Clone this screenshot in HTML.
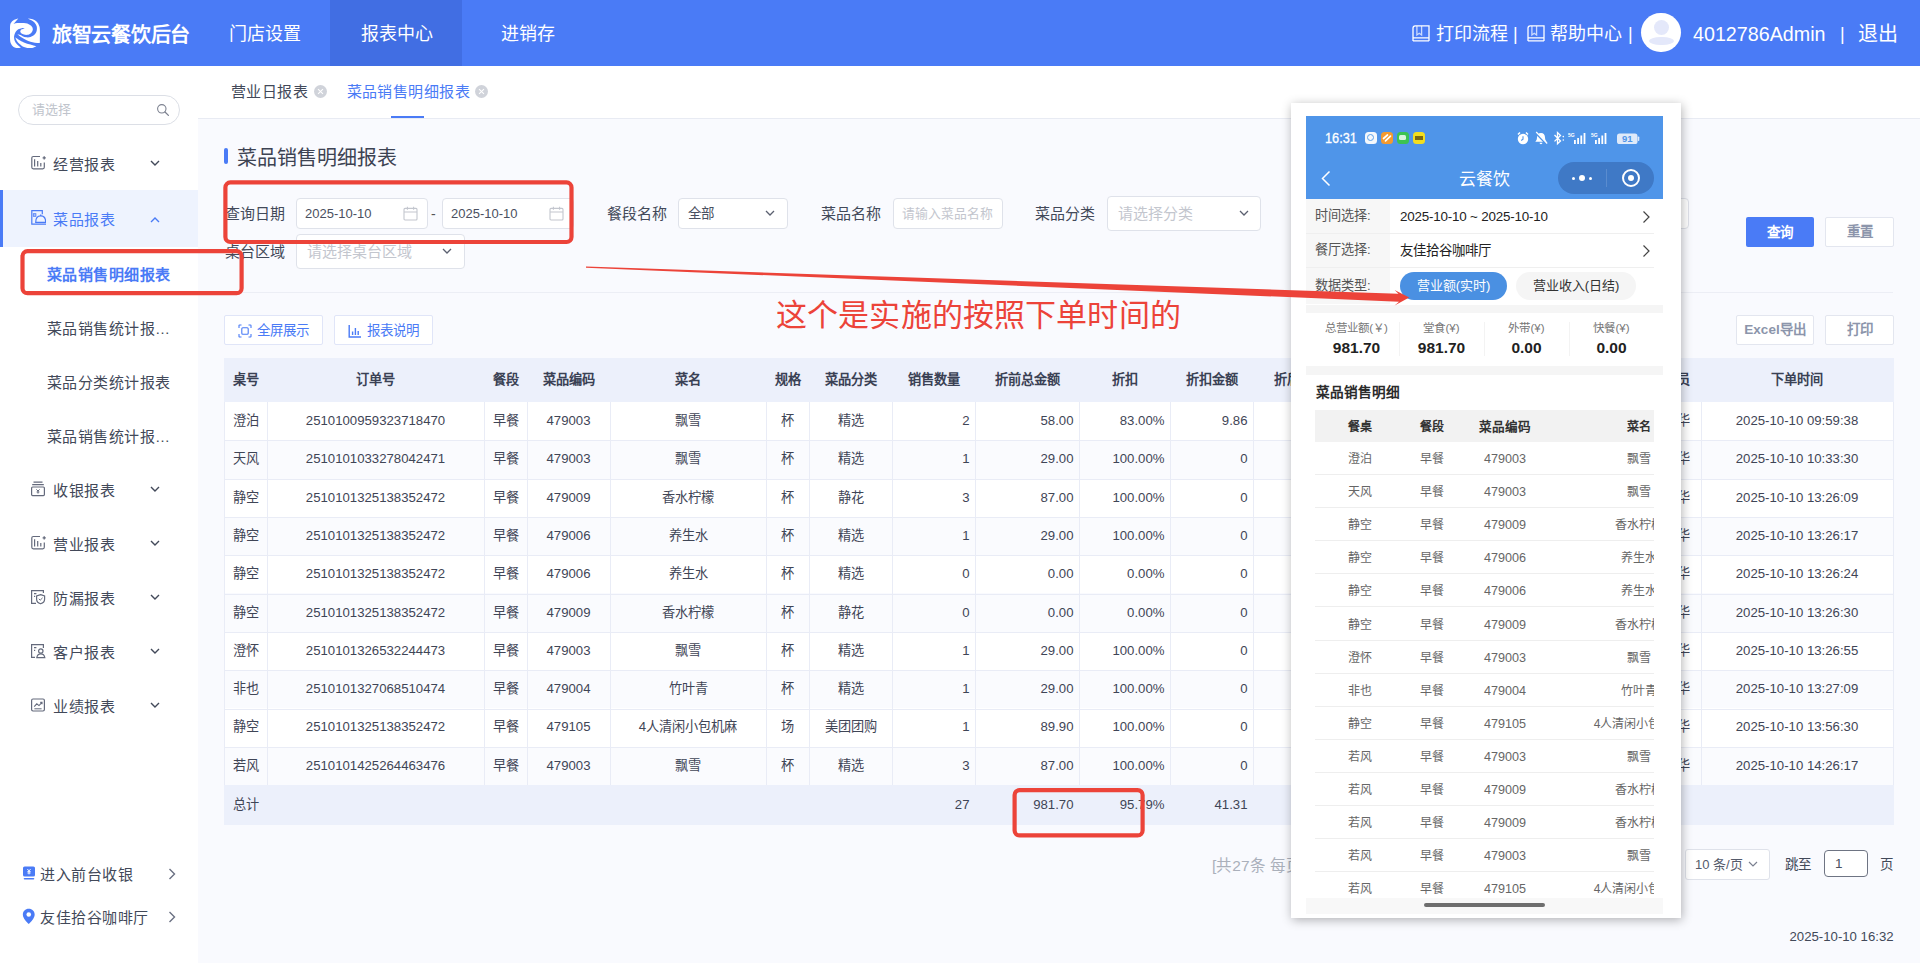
<!DOCTYPE html>
<html lang="zh-CN">
<head>
<meta charset="utf-8">
<title>菜品销售明细报表</title>
<style>
*{box-sizing:border-box;margin:0;padding:0}
html,body{width:1920px;height:963px;overflow:hidden}
body{font-family:"Liberation Sans",sans-serif;background:#f9fafe;color:#424959;position:relative;font-size:14px}
.abs{position:absolute}
/* ---------- header ---------- */
#hd{position:absolute;left:0;top:0;width:1920px;height:66px;background:#4a7bf6;color:#fff}
#hd .act{position:absolute;left:330px;top:0;width:132px;height:66px;background:#416ee3}
#hd .t{position:absolute;top:0;height:66px;line-height:68px;font-size:18px;white-space:nowrap}
#hd .brand{left:52px;font-size:20px;font-weight:bold;letter-spacing:-0.3px;line-height:70px}
/* ---------- sidebar ---------- */
#sb{position:absolute;left:0;top:66px;width:198px;height:897px;background:#fff}
#sb .search{position:absolute;left:18px;top:29px;width:162px;height:30px;border:1px solid #dcdfe6;border-radius:15px}
#sb .search span{position:absolute;left:13px;top:0;line-height:28px;font-size:13px;color:#c0c4cc}
.mi{position:absolute;left:0;width:198px;height:54px;line-height:57px;font-size:15px;letter-spacing:.7px;color:#424959;white-space:nowrap}
.mi .tx{position:absolute;left:53px;top:0}
.mi svg.ic{position:absolute;left:30px;top:19px}
.mi svg.ch{position:absolute;left:149px;top:22px}
.mi.on{background:#eef3fe;color:#4a7bf6}
.mi.on:before{content:"";position:absolute;left:0;top:0;width:3px;height:100%;background:#4a7bf6}
.sm{position:absolute;left:47px;height:54px;line-height:56px;font-size:15px;letter-spacing:.44px;color:#424959;white-space:nowrap}
.bt{position:absolute;left:40px;height:30px;line-height:33.400px;font-size:15px;letter-spacing:.55px;color:#424959;white-space:nowrap}
/* ---------- tabs ---------- */
#tabs{position:absolute;left:198px;top:66px;width:1722px;height:53px;background:#fff;border-bottom:1px solid #e8ebf3}
#tabs .tb{position:absolute;top:0;line-height:52px;font-size:15px;letter-spacing:.46px;white-space:nowrap}
#tabs .x{position:absolute;top:19px;width:13px;height:13px;border-radius:50%;background:#d0d3da}
#tabs .x:before,#tabs .x:after{content:"";position:absolute;left:6px;top:3px;width:1px;height:7px;background:#fff;transform:rotate(45deg)}
#tabs .x:after{transform:rotate(-45deg)}
/* ---------- content ---------- */
.lbl{position:absolute;font-size:15px;color:#424959;line-height:32px;white-space:nowrap}
.inp{position:absolute;height:30.500px;border:1px solid #dfe2ea;border-radius:4px;background:#fff;font-size:13px;line-height:29px;color:#4a5060;white-space:nowrap;overflow:hidden}
.inp .ph{color:#c3c6ce}
.btn{position:absolute;height:30px;line-height:28px;border:1px solid #e3e6ef;background:#fff;border-radius:2px;font-size:13.500px;text-align:center;color:#8c95ab;white-space:nowrap;font-weight:bold}
/* ---------- table ---------- */
.c{position:absolute;font-size:13.200px;color:#3f4556;white-space:nowrap;overflow:hidden}
.c.th{font-weight:bold;color:#3a4154;font-size:13.200px}
.thbg{position:absolute;background:#ecf0fb}
.row{position:absolute;left:224px;width:1670px}
.hl{position:absolute;left:224px;width:1670px;height:1px;background:#e9ecf6}
.vl{position:absolute;width:1px;background:#e9ecf6}
#ph{position:absolute;left:1306px;top:116px;width:357px;height:798px;overflow:hidden;background:#fff}
#ph .pl{position:absolute;left:9px;height:35px;line-height:34px;font-size:13.200px;color:#555;white-space:nowrap}
#ph .pv{position:absolute;left:94px;height:35px;line-height:35px;font-size:13.400px;color:#222;white-space:nowrap}
#ph .st{position:absolute;top:203.500px;width:85px;text-align:center}
#ph .st i{display:block;font-style:normal;font-size:11.500px;line-height:16px;color:#777;white-space:nowrap}
#ph .st b{display:block;font-size:15.500px;line-height:22px;color:#222;margin-top:1px}
#ph .pr{position:absolute;left:9px;width:339px;height:33px;line-height:34px;font-size:12px;color:#666;border-bottom:1px solid #eee;white-space:nowrap;overflow:hidden}
#ph .pr.ph{font-weight:bold;color:#333}
#ph .pr span{position:absolute;top:0}
#ph .p1{left:15px;width:60px;text-align:center}
#ph .p2{left:87px;width:60px;text-align:center}
#ph .p3{left:150px;width:80px;text-align:center;font-size:12.600px}
#ph .p4{left:254px;width:140px;text-align:center}

</style>
</head>
<body>
<!-- ================= HEADER ================= -->
<div id="hd">
  <div class="act"></div>
  <svg class="abs" style="left:9.7px;top:17.9px" width="30" height="30.5" viewBox="0 0 30 30.5"><path d="M8.28 0.44C7.56 1.30 6.92 2.13 6.10 3.05C5.29 3.98 4.35 4.95 3.49 5.88C4.78 5.63 6.00 5.25 7.41 5.10C8.82 4.95 10.36 4.97 11.77 5.01C13.18 5.06 14.51 5.15 15.69 5.36C16.88 5.57 17.82 5.85 18.74 6.23C19.67 6.62 20.51 7.06 21.14 7.63C21.77 8.20 22.18 8.85 22.45 9.59C22.72 10.33 22.90 11.15 22.76 11.99C22.61 12.83 22.15 13.81 21.58 14.52C21.01 15.22 20.18 15.73 19.40 16.13C18.62 16.53 17.93 16.80 17.00 16.87C16.07 16.94 14.88 16.80 13.95 16.56C13.02 16.33 12.16 15.92 11.55 15.48C10.94 15.03 10.55 14.47 10.37 13.95C10.20 13.43 10.31 12.87 10.55 12.42C10.79 11.98 11.04 11.67 11.77 11.33C12.50 11.00 13.81 10.75 14.82 10.46C13.81 10.36 12.88 10.01 11.77 10.16C10.66 10.31 9.33 10.67 8.28 11.33C7.23 12.00 6.28 12.93 5.58 14.08C4.88 15.23 4.31 16.67 4.14 18.09C3.97 19.51 4.10 21.08 4.58 22.45C5.06 23.82 5.90 24.95 6.97 26.16C8.05 27.36 9.60 28.40 10.90 29.51C9.75 29.74 8.71 30.36 7.41 30.21C6.11 30.06 4.40 29.48 3.27 28.64C2.14 27.80 1.34 26.71 0.78 25.28C0.23 23.86 0.13 22.98 0.00 20.27C-0.13 17.57 -0.15 11.97 0.00 9.37C0.15 6.78 0.20 6.26 0.87 5.01C1.54 3.77 2.66 2.83 3.92 2.05C5.18 1.27 6.84 0.97 8.28 0.44Z" fill="#fff"/><path d="M17.87 0.44C19.46 0.72 21.15 0.74 22.67 1.31C24.19 1.88 25.71 2.72 26.81 3.79C27.91 4.87 28.60 6.31 29.12 7.63C29.64 8.95 29.73 8.88 29.86 11.55C29.99 14.22 29.88 21.04 29.86 23.32C29.84 25.60 29.77 24.43 29.73 24.98C28.12 24.86 26.42 24.85 24.85 24.63C23.28 24.41 21.97 24.12 20.49 23.67C19.01 23.23 17.61 22.70 16.13 22.01C14.65 21.32 12.99 20.37 11.77 19.62C10.55 18.86 9.69 18.14 8.94 17.57C8.18 17.00 7.86 16.69 7.32 16.26C8.07 16.46 8.69 16.54 9.59 16.87C10.49 17.20 11.53 17.76 12.64 18.18C13.75 18.59 14.80 19.16 16.13 19.31C17.46 19.46 19.10 19.46 20.49 19.05C21.88 18.63 23.27 17.96 24.32 16.87C25.38 15.78 26.29 14.14 26.68 12.64C27.06 11.14 26.96 9.45 26.59 8.06C26.22 6.68 25.39 5.47 24.50 4.49C23.61 3.51 22.49 3.00 21.36 2.31C20.23 1.62 19.02 1.05 17.87 0.44Z" fill="#fff"/><path d="M5.23 19.18C5.81 19.66 6.31 20.14 6.97 20.62C7.64 21.10 7.97 21.37 9.15 22.01C10.34 22.66 12.02 23.63 13.95 24.41C15.88 25.19 18.38 25.92 20.49 26.59C22.60 27.26 24.43 27.76 26.37 28.33C25.29 28.84 24.40 29.54 23.10 29.86C21.81 30.18 20.30 30.36 18.74 30.21C17.19 30.06 15.51 29.71 13.95 28.99C12.39 28.26 10.81 27.01 9.59 25.94C8.37 24.86 7.50 23.82 6.76 22.67C6.02 21.52 5.73 20.33 5.23 19.18Z" fill="#fff"/></svg>
  <div class="t brand">旅智云餐饮后台</div>
  <div class="t" style="left:229px">门店设置</div>
  <div class="t" style="left:361px">报表中心</div>
  <div class="t" style="left:501px">进销存</div>
  <!-- right -->
  <svg class="abs book" style="left:1411.500px;top:24.5px" width="18" height="17" viewBox="0 0 18 17" fill="none" stroke="#fff" stroke-width="1.3"><path d="M1 16V3.200Q1 .9 3.200 .9H17V16M1 12.800H17M1 15.900H17"/><path d="M4.900 .9V10l2.350-1.700L9.600 10V.9" stroke-opacity=".72"/></svg>
  <div class="t" style="left:1436px">打印流程</div>
  <div class="t" style="left:1513px">|</div>
  <svg class="abs book" style="left:1526.500px;top:24.5px" width="18" height="17" viewBox="0 0 18 17" fill="none" stroke="#fff" stroke-width="1.3"><path d="M1 16V3.200Q1 .9 3.200 .9H17V16M1 12.800H17M1 15.900H17"/><path d="M4.900 .9V10l2.350-1.700L9.600 10V.9" stroke-opacity=".72"/></svg>
  <div class="t" style="left:1550px">帮助中心</div>
  <div class="t" style="left:1628px">|</div>
  <div class="abs" style="left:1641px;top:12.800px;width:39.500px;height:39.500px;border-radius:50%;background:#fff;overflow:hidden">
    <div class="abs" style="left:12.500px;top:7.500px;width:15px;height:15px;border-radius:50%;background:#e4e8fa"></div>
    <div class="abs" style="left:7.500px;top:24px;width:25px;height:8.500px;border-radius:50%;background:#e4e8fa"></div>
  </div>
  <div class="t" style="left:1693px;font-size:19.700px">4012786Admin</div>
  <div class="t" style="left:1840px">|</div>
  <div class="t" style="left:1858px;font-size:20px">退出</div>
</div>

<!-- ================= SIDEBAR ================= -->
<div id="sb">
  <div class="search"><span>请选择</span>
    <svg class="abs" style="left:137px;top:7px" width="14" height="14" viewBox="0 0 14 14"><circle cx="5.8" cy="5.8" r="4.2" fill="none" stroke="#7d8290" stroke-width="1.1"/><path d="M9 9l3.4 3.4" stroke="#7d8290" stroke-width="1.3" stroke-linecap="round"/></svg>
  </div>
    <div class="mi" style="top:70px">
    <svg class="ic" width="16" height="16" viewBox="0 0 16 16" fill="none" stroke="#646a7c" stroke-width="1.2"><path d="M10 1.500H3.300Q1.800 1.500 1.800 3V12.300Q1.800 13.800 3.300 13.800H12.800Q14.300 13.800 14.300 12.300V7.600"/><path d="M4.600 4.300V11.600M7.700 6.100V11.600M10.800 8V11.600"/><path d="M14.200 1.200V4.400M12.600 2.800H15.800" stroke-width="1.300"/></svg>
    <span class="tx">经营报表</span>
    <svg class="ch" width="12" height="10" viewBox="0 0 12 10"><path d="M2 3l4 4 4-4" fill="none" stroke="#424959" stroke-width="1.4"/></svg>
  </div>
  <div class="mi on" style="top:124px;height:56.500px;line-height:59px">
    <svg class="ic" style="top:20px" width="16" height="16" viewBox="0 0 16 16" fill="none" stroke="#4a7bf6" stroke-width="1.2"><path d="M12.300 4.300V.7H1.800V14.200H16"/><rect x="3.300" y="3.700" width="2.600" height="2.600" fill="#4a7bf6" fill-opacity=".4" stroke-width=".8"/><path d="M5.700 12.400C5.700 8 8 5.900 10.700 5.900S15.700 8 15.700 12.400Z"/><path d="M10.700 4.400V5.900"/></svg>
    <span class="tx">菜品报表</span>
    <svg class="ch" style="top:24.500px" width="12" height="10" viewBox="0 0 12 10"><path d="M2 7l4-4 4 4" fill="none" stroke="#4a7bf6" stroke-width="1.4"/></svg>
  </div>
  <div class="sm" style="top:181px;color:#4a7bf6;font-weight:bold">菜品销售明细报表</div>
  <div class="sm" style="top:235px">菜品销售统计报…</div>
  <div class="sm" style="top:289px">菜品分类统计报表</div>
  <div class="sm" style="top:343px">菜品销售统计报…</div>
  <div class="mi" style="top:396px">
    <svg class="ic" width="16" height="16" viewBox="0 0 16 16" fill="none" stroke="#646a7c" stroke-width="1.2"><path d="M3.5 1.2h9M2.2 3.6h11.6"/><rect x="1.6" y="6" width="12.8" height="8.6" rx="1"/><path d="M6.4 8.4L8 10l1.6-1.6M8 10v2.6M6.6 11h2.8" stroke-width="1"/></svg>
    <span class="tx">收银报表</span>
    <svg class="ch" width="12" height="10" viewBox="0 0 12 10"><path d="M2 3l4 4 4-4" fill="none" stroke="#424959" stroke-width="1.4"/></svg>
  </div>
  <div class="mi" style="top:450px">
    <svg class="ic" width="16" height="16" viewBox="0 0 16 16" fill="none" stroke="#646a7c" stroke-width="1.2"><path d="M10 1.500H3.300Q1.800 1.500 1.800 3V12.300Q1.800 13.800 3.300 13.800H12.800Q14.300 13.800 14.300 12.300V7.600"/><path d="M4.600 4.300V11.600M7.700 6.100V11.600M10.800 8V11.600"/><path d="M14.200 1.200V4.400M12.600 2.800H15.800" stroke-width="1.300"/></svg>
    <span class="tx">营业报表</span>
    <svg class="ch" width="12" height="10" viewBox="0 0 12 10"><path d="M2 3l4 4 4-4" fill="none" stroke="#424959" stroke-width="1.4"/></svg>
  </div>
  <div class="mi" style="top:504px">
    <svg class="ic" width="16" height="16" viewBox="0 0 16 16" fill="none" stroke="#646a7c" stroke-width="1.2"><path d="M6 14.4H1.6V1.6h11.8V4"/><path d="M4 4.6h2.4M4 7.4h1.2"/><path d="M10.6 5.6l4 1.4v3.2c0 2.2-1.6 3.8-4 4.6-2.4-.8-4-2.4-4-4.6V7z"/><path d="M8.8 9.8l1.4 1.4 2.4-2.4" stroke-width="1"/></svg>
    <span class="tx">防漏报表</span>
    <svg class="ch" width="12" height="10" viewBox="0 0 12 10"><path d="M2 3l4 4 4-4" fill="none" stroke="#424959" stroke-width="1.4"/></svg>
  </div>
  <div class="mi" style="top:558px">
    <svg class="ic" width="16" height="16" viewBox="0 0 16 16" fill="none" stroke="#646a7c" stroke-width="1.2"><path d="M5 14.4H1.6V1.6h11.8V5"/><path d="M4 4.6h2.4M4 7.4h1.2"/><circle cx="10.8" cy="8" r="2.2"/><path d="M6.8 14.6c.4-2.4 2-3.8 4-3.8s3.6 1.4 4 3.8z"/></svg>
    <span class="tx">客户报表</span>
    <svg class="ch" width="12" height="10" viewBox="0 0 12 10"><path d="M2 3l4 4 4-4" fill="none" stroke="#424959" stroke-width="1.4"/></svg>
  </div>
  <div class="mi" style="top:612px">
    <svg class="ic" width="16" height="16" viewBox="0 0 16 16" fill="none" stroke="#646a7c" stroke-width="1.2"><rect x="1.6" y="2" width="12.8" height="12" rx="1.4"/><path d="M4.2 9.6l2.6-2.8 2.2 1.8 2.8-3M10.2 5.4h1.8v1.8" stroke-width="1.1"/><path d="M4.4 11.8h7.2" stroke-width="1"/></svg>
    <span class="tx">业绩报表</span>
    <svg class="ch" width="12" height="10" viewBox="0 0 12 10"><path d="M2 3l4 4 4-4" fill="none" stroke="#424959" stroke-width="1.4"/></svg>
  </div>
  <!-- bottom links -->
  <svg class="abs" style="left:22px;top:800px" width="14" height="14" viewBox="0 0 14 14"><rect x="1" y="0.5" width="12" height="10" rx="1.6" fill="#4a7bf6"/><path d="M2.5 12.8h9" stroke="#4a7bf6" stroke-width="1.6" stroke-linecap="round"/><path d="M5.4 3l1.6 2 1.6-2M7 5v3.4M5.4 5.6h3.2M5.4 7h3.2" stroke="#fff" stroke-width="0.9" fill="none"/></svg>
  <div class="bt" style="top:792px">进入前台收银</div>
  <svg class="abs" style="left:167px;top:801px" width="10" height="14" viewBox="0 0 10 14"><path d="M2.5 2l5 5-5 5" fill="none" stroke="#6a7082" stroke-width="1.4"/></svg>
  <svg class="abs" style="left:21.800px;top:841.800px" width="13.500" height="17" viewBox="0 0 13 16"><path d="M6.5 0.5C3.2 0.5 0.8 3 0.8 6.1c0 3.6 3.8 7.3 5.7 9.2 1.9-1.9 5.7-5.6 5.7-9.2C12.200 3 9.800 0.500 6.500 0.500z" fill="#4a7bf6"/><circle cx="6.5" cy="6" r="2.2" fill="#fff"/></svg>
  <div class="bt" style="top:835px">友佳拾谷咖啡厅</div>
  <svg class="abs" style="left:167px;top:844px" width="10" height="14" viewBox="0 0 10 14"><path d="M2.5 2l5 5-5 5" fill="none" stroke="#6a7082" stroke-width="1.4"/></svg>

</div>

<!-- ================= TABS ================= -->
<div id="tabs">
  <div class="tb" style="left:33px;color:#424959">营业日报表</div><div class="x" style="left:116px"></div>
  <div class="tb" style="left:148.500px;color:#4a7bf6">菜品销售明细报表</div><div class="x" style="left:277px"></div>
  <div class="abs" style="left:193px;top:50px;width:33px;height:2px;background:#4a7bf6"></div>
</div>

<!-- ================= CONTENT ================= -->
<div class="abs" style="left:224px;top:148px;width:4px;height:16px;background:#4a7bf6;border-radius:2px"></div>
<div class="abs" style="left:237px;top:142.500px;font-size:20px;line-height:30px;color:#3d4353;white-space:nowrap">菜品销售明细报表</div>

<!-- filter row 1 -->
<div class="lbl" style="left:225px;top:198px">查询日期</div>
<div class="inp" style="left:296px;top:198px;width:132px"><span style="margin-left:8px">2025-10-10</span>
  <svg class="abs cal" style="left:106px;top:7px" width="15" height="15" viewBox="0 0 15 15" fill="none" stroke="#c3c6ce" stroke-width="1.1"><rect x="1" y="2.4" width="13" height="11.6" rx="1"/><path d="M1 6h13M4.4 0.8v3M10.6 0.8v3"/></svg>
</div>
<div class="lbl" style="left:431px;top:198px;font-size:14px;color:#555">-</div>
<div class="inp" style="left:442px;top:198px;width:132px"><span style="margin-left:8px">2025-10-10</span>
  <svg class="abs cal" style="left:106px;top:7px" width="15" height="15" viewBox="0 0 15 15" fill="none" stroke="#c3c6ce" stroke-width="1.1"><rect x="1" y="2.4" width="13" height="11.6" rx="1"/><path d="M1 6h13M4.4 0.8v3M10.6 0.8v3"/></svg>
</div>
<div class="lbl" style="left:607px;top:198px">餐段名称</div>
<div class="inp" style="left:678px;top:198px;width:110px"><span style="margin-left:9px;font-size:13.5px">全部</span>
  <svg class="abs" style="left:85px;top:9px" width="12" height="10" viewBox="0 0 12 10"><path d="M2 3l4 4 4-4" fill="none" stroke="#5b6070" stroke-width="1.3"/></svg>
</div>
<div class="lbl" style="left:821px;top:198px">菜品名称</div>
<div class="inp" style="left:893px;top:198px;width:110px"><span class="ph" style="margin-left:8px;font-size:12.8px">请输入菜品名称</span></div>
<div class="lbl" style="left:1035px;top:198px">菜品分类</div>
<div class="inp" style="left:1107px;top:196px;width:154px;height:34.500px;line-height:33px"><span class="ph" style="margin-left:10px;font-size:15px">请选择分类</span>
  <svg class="abs" style="left:130px;top:11px" width="12" height="10" viewBox="0 0 12 10"><path d="M2 3l4 4 4-4" fill="none" stroke="#5b6070" stroke-width="1.3"/></svg>
</div>
<div class="inp" style="left:1560px;top:198px;width:129px"></div>
<div class="abs" style="left:1746px;top:217px;width:68px;height:30px;background:#4a7bf6;border-radius:2px;color:#fff;font-size:13.500px;font-weight:bold;line-height:31px;text-align:center">查询</div>
<div class="btn" style="left:1825px;top:217px;width:69px">重置</div>

<!-- filter row 2 -->
<div class="lbl" style="left:225px;top:236px">桌台区域</div>
<div class="inp" style="left:296px;top:234px;width:169px;height:34.500px;line-height:33px"><span class="ph" style="margin-left:10px;font-size:15px">请选择桌台区域</span>
  <svg class="abs" style="left:144px;top:11px" width="12" height="10" viewBox="0 0 12 10"><path d="M2 3l4 4 4-4" fill="none" stroke="#5b6070" stroke-width="1.3"/></svg>
</div>
<div class="abs" style="left:224px;top:292px;width:1669px;height:1px;background:#eceef5"></div>

<!-- toolbar -->
<div class="btn" style="left:224px;top:315px;width:99px;color:#4a7bf6;text-align:left;padding-left:32px;font-weight:normal;line-height:30px;border-color:#e0e5f8">全屏展示
  <svg class="abs" style="left:13px;top:8px" width="14" height="14" viewBox="0 0 14 14" fill="none" stroke="#4a7bf6" stroke-width="1.1"><path d="M1 4V1.6C1 1.200 1.200 1 1.600 1H3.500M10.500 1h1.900c.4 0 .6.2.6.6V4M13 10v2.400c0 .4-.2.6-.6.6h-1.900M3.500 13H1.600C1.200 13 1 12.800 1 12.400V10"/><rect x="3.800" y="3.800" width="6.400" height="6.400" rx="1"/></svg>
</div>
<div class="btn" style="left:334px;top:315px;width:99px;color:#4a7bf6;text-align:left;padding-left:32px;font-weight:normal;line-height:30px;border-color:#e0e5f8">报表说明
  <svg class="abs" style="left:13px;top:8px" width="14" height="14" viewBox="0 0 14 14" fill="none" stroke="#4a7bf6" stroke-width="1.2"><path d="M1.200 1v12h11.800M4.600 7.500v3.400M7.400 4v6.900M10.200 7v3.900" stroke-width="1.400"/></svg>
</div>
<div class="btn" style="left:1736px;top:315px;width:78px">Excel导出</div>
<div class="btn" style="left:1825px;top:315px;width:69px">打印</div>

<div class="thbg" style="left:224px;top:358px;width:1670px;height:44px"></div>
<div class="c th" style="left:224px;top:358.0px;width:43px;height:44.0px;line-height:44.0px;text-align:left;padding-left:9px;">桌号</div>
<div class="c th" style="left:267px;top:358.0px;width:217px;height:44.0px;line-height:44.0px;text-align:center;">订单号</div>
<div class="c th" style="left:484px;top:358.0px;width:43px;height:44.0px;line-height:44.0px;text-align:center;">餐段</div>
<div class="c th" style="left:527px;top:358.0px;width:83px;height:44.0px;line-height:44.0px;text-align:center;">菜品编码</div>
<div class="c th" style="left:610px;top:358.0px;width:156px;height:44.0px;line-height:44.0px;text-align:center;">菜名</div>
<div class="c th" style="left:766px;top:358.0px;width:43px;height:44.0px;line-height:44.0px;text-align:center;">规格</div>
<div class="c th" style="left:809px;top:358.0px;width:83px;height:44.0px;line-height:44.0px;text-align:center;">菜品分类</div>
<div class="c th" style="left:892px;top:358.0px;width:83px;height:44.0px;line-height:44.0px;text-align:center;">销售数量</div>
<div class="c th" style="left:975px;top:358.0px;width:104px;height:44.0px;line-height:44.0px;text-align:center;">折前总金额</div>
<div class="c th" style="left:1079px;top:358.0px;width:91px;height:44.0px;line-height:44.0px;text-align:center;">折扣</div>
<div class="c th" style="left:1170px;top:358.0px;width:83px;height:44.0px;line-height:44.0px;text-align:center;">折扣金额</div>
<div class="c th" style="left:1253px;top:358.0px;width:93px;height:44.0px;line-height:44.0px;text-align:center;">折后金额</div>
<div class="c th" style="left:1346px;top:358.0px;width:94px;height:44.0px;line-height:44.0px;text-align:center;">实收金额</div>
<div class="c th" style="left:1440px;top:358.0px;width:94px;height:44.0px;line-height:44.0px;text-align:center;">优惠金额</div>
<div class="c th" style="left:1534px;top:358.0px;width:105px;height:44.0px;line-height:44.0px;text-align:center;">服务员</div>
<div class="c th" style="left:1639px;top:358.0px;width:62px;height:44.0px;line-height:44.0px;text-align:center;">点菜员</div>
<div class="c th" style="left:1701px;top:358.0px;width:192px;height:44.0px;line-height:44.0px;text-align:center;">下单时间</div>
<div class="row" style="top:402.0px;height:38.3px;background:#ffffff"></div>
<div class="c " style="left:224px;top:402.0px;width:43px;height:38.3px;line-height:38.3px;text-align:left;padding-left:9px;">澄泊</div>
<div class="c " style="left:267px;top:402.0px;width:217px;height:38.3px;line-height:38.3px;text-align:center;">2510100959323718470</div>
<div class="c " style="left:484px;top:402.0px;width:43px;height:38.3px;line-height:38.3px;text-align:center;">早餐</div>
<div class="c " style="left:527px;top:402.0px;width:83px;height:38.3px;line-height:38.3px;text-align:center;">479003</div>
<div class="c " style="left:610px;top:402.0px;width:156px;height:38.3px;line-height:38.3px;text-align:center;">飘雪</div>
<div class="c " style="left:766px;top:402.0px;width:43px;height:38.3px;line-height:38.3px;text-align:center;">杯</div>
<div class="c " style="left:809px;top:402.0px;width:83px;height:38.3px;line-height:38.3px;text-align:center;">精选</div>
<div class="c " style="left:892px;top:402.0px;width:83px;height:38.3px;line-height:38.3px;text-align:right;padding-right:5.500px;">2</div>
<div class="c " style="left:975px;top:402.0px;width:104px;height:38.3px;line-height:38.3px;text-align:right;padding-right:5.500px;">58.00</div>
<div class="c " style="left:1079px;top:402.0px;width:91px;height:38.3px;line-height:38.3px;text-align:right;padding-right:5.500px;">83.00%</div>
<div class="c " style="left:1170px;top:402.0px;width:83px;height:38.3px;line-height:38.3px;text-align:right;padding-right:5.500px;">9.86</div>
<div class="c " style="left:1253px;top:402.0px;width:93px;height:38.3px;line-height:38.3px;text-align:right;padding-right:5.500px;"></div>
<div class="c " style="left:1346px;top:402.0px;width:94px;height:38.3px;line-height:38.3px;text-align:right;padding-right:5.500px;"></div>
<div class="c " style="left:1440px;top:402.0px;width:94px;height:38.3px;line-height:38.3px;text-align:right;padding-right:5.500px;"></div>
<div class="c " style="left:1534px;top:402.0px;width:105px;height:38.3px;line-height:38.3px;text-align:center;"></div>
<div class="c " style="left:1639px;top:402.0px;width:62px;height:38.3px;line-height:38.3px;text-align:center;">张丽华</div>
<div class="c " style="left:1701px;top:402.0px;width:192px;height:38.3px;line-height:38.3px;text-align:center;">2025-10-10 09:59:38</div>
<div class="row" style="top:440.3px;height:38.3px;background:#fafbfe"></div>
<div class="c " style="left:224px;top:440.3px;width:43px;height:38.3px;line-height:38.3px;text-align:left;padding-left:9px;">天风</div>
<div class="c " style="left:267px;top:440.3px;width:217px;height:38.3px;line-height:38.3px;text-align:center;">2510101033278042471</div>
<div class="c " style="left:484px;top:440.3px;width:43px;height:38.3px;line-height:38.3px;text-align:center;">早餐</div>
<div class="c " style="left:527px;top:440.3px;width:83px;height:38.3px;line-height:38.3px;text-align:center;">479003</div>
<div class="c " style="left:610px;top:440.3px;width:156px;height:38.3px;line-height:38.3px;text-align:center;">飘雪</div>
<div class="c " style="left:766px;top:440.3px;width:43px;height:38.3px;line-height:38.3px;text-align:center;">杯</div>
<div class="c " style="left:809px;top:440.3px;width:83px;height:38.3px;line-height:38.3px;text-align:center;">精选</div>
<div class="c " style="left:892px;top:440.3px;width:83px;height:38.3px;line-height:38.3px;text-align:right;padding-right:5.500px;">1</div>
<div class="c " style="left:975px;top:440.3px;width:104px;height:38.3px;line-height:38.3px;text-align:right;padding-right:5.500px;">29.00</div>
<div class="c " style="left:1079px;top:440.3px;width:91px;height:38.3px;line-height:38.3px;text-align:right;padding-right:5.500px;">100.00%</div>
<div class="c " style="left:1170px;top:440.3px;width:83px;height:38.3px;line-height:38.3px;text-align:right;padding-right:5.500px;">0</div>
<div class="c " style="left:1253px;top:440.3px;width:93px;height:38.3px;line-height:38.3px;text-align:right;padding-right:5.500px;"></div>
<div class="c " style="left:1346px;top:440.3px;width:94px;height:38.3px;line-height:38.3px;text-align:right;padding-right:5.500px;"></div>
<div class="c " style="left:1440px;top:440.3px;width:94px;height:38.3px;line-height:38.3px;text-align:right;padding-right:5.500px;"></div>
<div class="c " style="left:1534px;top:440.3px;width:105px;height:38.3px;line-height:38.3px;text-align:center;"></div>
<div class="c " style="left:1639px;top:440.3px;width:62px;height:38.3px;line-height:38.3px;text-align:center;">张丽华</div>
<div class="c " style="left:1701px;top:440.3px;width:192px;height:38.3px;line-height:38.3px;text-align:center;">2025-10-10 10:33:30</div>
<div class="row" style="top:478.6px;height:38.3px;background:#ffffff"></div>
<div class="c " style="left:224px;top:478.6px;width:43px;height:38.3px;line-height:38.3px;text-align:left;padding-left:9px;">静空</div>
<div class="c " style="left:267px;top:478.6px;width:217px;height:38.3px;line-height:38.3px;text-align:center;">2510101325138352472</div>
<div class="c " style="left:484px;top:478.6px;width:43px;height:38.3px;line-height:38.3px;text-align:center;">早餐</div>
<div class="c " style="left:527px;top:478.6px;width:83px;height:38.3px;line-height:38.3px;text-align:center;">479009</div>
<div class="c " style="left:610px;top:478.6px;width:156px;height:38.3px;line-height:38.3px;text-align:center;">香水柠檬</div>
<div class="c " style="left:766px;top:478.6px;width:43px;height:38.3px;line-height:38.3px;text-align:center;">杯</div>
<div class="c " style="left:809px;top:478.6px;width:83px;height:38.3px;line-height:38.3px;text-align:center;">静花</div>
<div class="c " style="left:892px;top:478.6px;width:83px;height:38.3px;line-height:38.3px;text-align:right;padding-right:5.500px;">3</div>
<div class="c " style="left:975px;top:478.6px;width:104px;height:38.3px;line-height:38.3px;text-align:right;padding-right:5.500px;">87.00</div>
<div class="c " style="left:1079px;top:478.6px;width:91px;height:38.3px;line-height:38.3px;text-align:right;padding-right:5.500px;">100.00%</div>
<div class="c " style="left:1170px;top:478.6px;width:83px;height:38.3px;line-height:38.3px;text-align:right;padding-right:5.500px;">0</div>
<div class="c " style="left:1253px;top:478.6px;width:93px;height:38.3px;line-height:38.3px;text-align:right;padding-right:5.500px;"></div>
<div class="c " style="left:1346px;top:478.6px;width:94px;height:38.3px;line-height:38.3px;text-align:right;padding-right:5.500px;"></div>
<div class="c " style="left:1440px;top:478.6px;width:94px;height:38.3px;line-height:38.3px;text-align:right;padding-right:5.500px;"></div>
<div class="c " style="left:1534px;top:478.6px;width:105px;height:38.3px;line-height:38.3px;text-align:center;"></div>
<div class="c " style="left:1639px;top:478.6px;width:62px;height:38.3px;line-height:38.3px;text-align:center;">张丽华</div>
<div class="c " style="left:1701px;top:478.6px;width:192px;height:38.3px;line-height:38.3px;text-align:center;">2025-10-10 13:26:09</div>
<div class="row" style="top:516.9px;height:38.3px;background:#fafbfe"></div>
<div class="c " style="left:224px;top:516.9px;width:43px;height:38.3px;line-height:38.3px;text-align:left;padding-left:9px;">静空</div>
<div class="c " style="left:267px;top:516.9px;width:217px;height:38.3px;line-height:38.3px;text-align:center;">2510101325138352472</div>
<div class="c " style="left:484px;top:516.9px;width:43px;height:38.3px;line-height:38.3px;text-align:center;">早餐</div>
<div class="c " style="left:527px;top:516.9px;width:83px;height:38.3px;line-height:38.3px;text-align:center;">479006</div>
<div class="c " style="left:610px;top:516.9px;width:156px;height:38.3px;line-height:38.3px;text-align:center;">养生水</div>
<div class="c " style="left:766px;top:516.9px;width:43px;height:38.3px;line-height:38.3px;text-align:center;">杯</div>
<div class="c " style="left:809px;top:516.9px;width:83px;height:38.3px;line-height:38.3px;text-align:center;">精选</div>
<div class="c " style="left:892px;top:516.9px;width:83px;height:38.3px;line-height:38.3px;text-align:right;padding-right:5.500px;">1</div>
<div class="c " style="left:975px;top:516.9px;width:104px;height:38.3px;line-height:38.3px;text-align:right;padding-right:5.500px;">29.00</div>
<div class="c " style="left:1079px;top:516.9px;width:91px;height:38.3px;line-height:38.3px;text-align:right;padding-right:5.500px;">100.00%</div>
<div class="c " style="left:1170px;top:516.9px;width:83px;height:38.3px;line-height:38.3px;text-align:right;padding-right:5.500px;">0</div>
<div class="c " style="left:1253px;top:516.9px;width:93px;height:38.3px;line-height:38.3px;text-align:right;padding-right:5.500px;"></div>
<div class="c " style="left:1346px;top:516.9px;width:94px;height:38.3px;line-height:38.3px;text-align:right;padding-right:5.500px;"></div>
<div class="c " style="left:1440px;top:516.9px;width:94px;height:38.3px;line-height:38.3px;text-align:right;padding-right:5.500px;"></div>
<div class="c " style="left:1534px;top:516.9px;width:105px;height:38.3px;line-height:38.3px;text-align:center;"></div>
<div class="c " style="left:1639px;top:516.9px;width:62px;height:38.3px;line-height:38.3px;text-align:center;">张丽华</div>
<div class="c " style="left:1701px;top:516.9px;width:192px;height:38.3px;line-height:38.3px;text-align:center;">2025-10-10 13:26:17</div>
<div class="row" style="top:555.2px;height:38.3px;background:#ffffff"></div>
<div class="c " style="left:224px;top:555.2px;width:43px;height:38.3px;line-height:38.3px;text-align:left;padding-left:9px;">静空</div>
<div class="c " style="left:267px;top:555.2px;width:217px;height:38.3px;line-height:38.3px;text-align:center;">2510101325138352472</div>
<div class="c " style="left:484px;top:555.2px;width:43px;height:38.3px;line-height:38.3px;text-align:center;">早餐</div>
<div class="c " style="left:527px;top:555.2px;width:83px;height:38.3px;line-height:38.3px;text-align:center;">479006</div>
<div class="c " style="left:610px;top:555.2px;width:156px;height:38.3px;line-height:38.3px;text-align:center;">养生水</div>
<div class="c " style="left:766px;top:555.2px;width:43px;height:38.3px;line-height:38.3px;text-align:center;">杯</div>
<div class="c " style="left:809px;top:555.2px;width:83px;height:38.3px;line-height:38.3px;text-align:center;">精选</div>
<div class="c " style="left:892px;top:555.2px;width:83px;height:38.3px;line-height:38.3px;text-align:right;padding-right:5.500px;">0</div>
<div class="c " style="left:975px;top:555.2px;width:104px;height:38.3px;line-height:38.3px;text-align:right;padding-right:5.500px;">0.00</div>
<div class="c " style="left:1079px;top:555.2px;width:91px;height:38.3px;line-height:38.3px;text-align:right;padding-right:5.500px;">0.00%</div>
<div class="c " style="left:1170px;top:555.2px;width:83px;height:38.3px;line-height:38.3px;text-align:right;padding-right:5.500px;">0</div>
<div class="c " style="left:1253px;top:555.2px;width:93px;height:38.3px;line-height:38.3px;text-align:right;padding-right:5.500px;"></div>
<div class="c " style="left:1346px;top:555.2px;width:94px;height:38.3px;line-height:38.3px;text-align:right;padding-right:5.500px;"></div>
<div class="c " style="left:1440px;top:555.2px;width:94px;height:38.3px;line-height:38.3px;text-align:right;padding-right:5.500px;"></div>
<div class="c " style="left:1534px;top:555.2px;width:105px;height:38.3px;line-height:38.3px;text-align:center;"></div>
<div class="c " style="left:1639px;top:555.2px;width:62px;height:38.3px;line-height:38.3px;text-align:center;">张丽华</div>
<div class="c " style="left:1701px;top:555.2px;width:192px;height:38.3px;line-height:38.3px;text-align:center;">2025-10-10 13:26:24</div>
<div class="row" style="top:593.5px;height:38.3px;background:#fafbfe"></div>
<div class="c " style="left:224px;top:593.5px;width:43px;height:38.3px;line-height:38.3px;text-align:left;padding-left:9px;">静空</div>
<div class="c " style="left:267px;top:593.5px;width:217px;height:38.3px;line-height:38.3px;text-align:center;">2510101325138352472</div>
<div class="c " style="left:484px;top:593.5px;width:43px;height:38.3px;line-height:38.3px;text-align:center;">早餐</div>
<div class="c " style="left:527px;top:593.5px;width:83px;height:38.3px;line-height:38.3px;text-align:center;">479009</div>
<div class="c " style="left:610px;top:593.5px;width:156px;height:38.3px;line-height:38.3px;text-align:center;">香水柠檬</div>
<div class="c " style="left:766px;top:593.5px;width:43px;height:38.3px;line-height:38.3px;text-align:center;">杯</div>
<div class="c " style="left:809px;top:593.5px;width:83px;height:38.3px;line-height:38.3px;text-align:center;">静花</div>
<div class="c " style="left:892px;top:593.5px;width:83px;height:38.3px;line-height:38.3px;text-align:right;padding-right:5.500px;">0</div>
<div class="c " style="left:975px;top:593.5px;width:104px;height:38.3px;line-height:38.3px;text-align:right;padding-right:5.500px;">0.00</div>
<div class="c " style="left:1079px;top:593.5px;width:91px;height:38.3px;line-height:38.3px;text-align:right;padding-right:5.500px;">0.00%</div>
<div class="c " style="left:1170px;top:593.5px;width:83px;height:38.3px;line-height:38.3px;text-align:right;padding-right:5.500px;">0</div>
<div class="c " style="left:1253px;top:593.5px;width:93px;height:38.3px;line-height:38.3px;text-align:right;padding-right:5.500px;"></div>
<div class="c " style="left:1346px;top:593.5px;width:94px;height:38.3px;line-height:38.3px;text-align:right;padding-right:5.500px;"></div>
<div class="c " style="left:1440px;top:593.5px;width:94px;height:38.3px;line-height:38.3px;text-align:right;padding-right:5.500px;"></div>
<div class="c " style="left:1534px;top:593.5px;width:105px;height:38.3px;line-height:38.3px;text-align:center;"></div>
<div class="c " style="left:1639px;top:593.5px;width:62px;height:38.3px;line-height:38.3px;text-align:center;">张丽华</div>
<div class="c " style="left:1701px;top:593.5px;width:192px;height:38.3px;line-height:38.3px;text-align:center;">2025-10-10 13:26:30</div>
<div class="row" style="top:631.8px;height:38.3px;background:#ffffff"></div>
<div class="c " style="left:224px;top:631.8px;width:43px;height:38.3px;line-height:38.3px;text-align:left;padding-left:9px;">澄怀</div>
<div class="c " style="left:267px;top:631.8px;width:217px;height:38.3px;line-height:38.3px;text-align:center;">2510101326532244473</div>
<div class="c " style="left:484px;top:631.8px;width:43px;height:38.3px;line-height:38.3px;text-align:center;">早餐</div>
<div class="c " style="left:527px;top:631.8px;width:83px;height:38.3px;line-height:38.3px;text-align:center;">479003</div>
<div class="c " style="left:610px;top:631.8px;width:156px;height:38.3px;line-height:38.3px;text-align:center;">飘雪</div>
<div class="c " style="left:766px;top:631.8px;width:43px;height:38.3px;line-height:38.3px;text-align:center;">杯</div>
<div class="c " style="left:809px;top:631.8px;width:83px;height:38.3px;line-height:38.3px;text-align:center;">精选</div>
<div class="c " style="left:892px;top:631.8px;width:83px;height:38.3px;line-height:38.3px;text-align:right;padding-right:5.500px;">1</div>
<div class="c " style="left:975px;top:631.8px;width:104px;height:38.3px;line-height:38.3px;text-align:right;padding-right:5.500px;">29.00</div>
<div class="c " style="left:1079px;top:631.8px;width:91px;height:38.3px;line-height:38.3px;text-align:right;padding-right:5.500px;">100.00%</div>
<div class="c " style="left:1170px;top:631.8px;width:83px;height:38.3px;line-height:38.3px;text-align:right;padding-right:5.500px;">0</div>
<div class="c " style="left:1253px;top:631.8px;width:93px;height:38.3px;line-height:38.3px;text-align:right;padding-right:5.500px;"></div>
<div class="c " style="left:1346px;top:631.8px;width:94px;height:38.3px;line-height:38.3px;text-align:right;padding-right:5.500px;"></div>
<div class="c " style="left:1440px;top:631.8px;width:94px;height:38.3px;line-height:38.3px;text-align:right;padding-right:5.500px;"></div>
<div class="c " style="left:1534px;top:631.8px;width:105px;height:38.3px;line-height:38.3px;text-align:center;"></div>
<div class="c " style="left:1639px;top:631.8px;width:62px;height:38.3px;line-height:38.3px;text-align:center;">张丽华</div>
<div class="c " style="left:1701px;top:631.8px;width:192px;height:38.3px;line-height:38.3px;text-align:center;">2025-10-10 13:26:55</div>
<div class="row" style="top:670.1px;height:38.3px;background:#fafbfe"></div>
<div class="c " style="left:224px;top:670.1px;width:43px;height:38.3px;line-height:38.3px;text-align:left;padding-left:9px;">非也</div>
<div class="c " style="left:267px;top:670.1px;width:217px;height:38.3px;line-height:38.3px;text-align:center;">2510101327068510474</div>
<div class="c " style="left:484px;top:670.1px;width:43px;height:38.3px;line-height:38.3px;text-align:center;">早餐</div>
<div class="c " style="left:527px;top:670.1px;width:83px;height:38.3px;line-height:38.3px;text-align:center;">479004</div>
<div class="c " style="left:610px;top:670.1px;width:156px;height:38.3px;line-height:38.3px;text-align:center;">竹叶青</div>
<div class="c " style="left:766px;top:670.1px;width:43px;height:38.3px;line-height:38.3px;text-align:center;">杯</div>
<div class="c " style="left:809px;top:670.1px;width:83px;height:38.3px;line-height:38.3px;text-align:center;">精选</div>
<div class="c " style="left:892px;top:670.1px;width:83px;height:38.3px;line-height:38.3px;text-align:right;padding-right:5.500px;">1</div>
<div class="c " style="left:975px;top:670.1px;width:104px;height:38.3px;line-height:38.3px;text-align:right;padding-right:5.500px;">29.00</div>
<div class="c " style="left:1079px;top:670.1px;width:91px;height:38.3px;line-height:38.3px;text-align:right;padding-right:5.500px;">100.00%</div>
<div class="c " style="left:1170px;top:670.1px;width:83px;height:38.3px;line-height:38.3px;text-align:right;padding-right:5.500px;">0</div>
<div class="c " style="left:1253px;top:670.1px;width:93px;height:38.3px;line-height:38.3px;text-align:right;padding-right:5.500px;"></div>
<div class="c " style="left:1346px;top:670.1px;width:94px;height:38.3px;line-height:38.3px;text-align:right;padding-right:5.500px;"></div>
<div class="c " style="left:1440px;top:670.1px;width:94px;height:38.3px;line-height:38.3px;text-align:right;padding-right:5.500px;"></div>
<div class="c " style="left:1534px;top:670.1px;width:105px;height:38.3px;line-height:38.3px;text-align:center;"></div>
<div class="c " style="left:1639px;top:670.1px;width:62px;height:38.3px;line-height:38.3px;text-align:center;">张丽华</div>
<div class="c " style="left:1701px;top:670.1px;width:192px;height:38.3px;line-height:38.3px;text-align:center;">2025-10-10 13:27:09</div>
<div class="row" style="top:708.4px;height:38.3px;background:#ffffff"></div>
<div class="c " style="left:224px;top:708.4px;width:43px;height:38.3px;line-height:38.3px;text-align:left;padding-left:9px;">静空</div>
<div class="c " style="left:267px;top:708.4px;width:217px;height:38.3px;line-height:38.3px;text-align:center;">2510101325138352472</div>
<div class="c " style="left:484px;top:708.4px;width:43px;height:38.3px;line-height:38.3px;text-align:center;">早餐</div>
<div class="c " style="left:527px;top:708.4px;width:83px;height:38.3px;line-height:38.3px;text-align:center;">479105</div>
<div class="c " style="left:610px;top:708.4px;width:156px;height:38.3px;line-height:38.3px;text-align:center;">4人清闲小包机麻</div>
<div class="c " style="left:766px;top:708.4px;width:43px;height:38.3px;line-height:38.3px;text-align:center;">场</div>
<div class="c " style="left:809px;top:708.4px;width:83px;height:38.3px;line-height:38.3px;text-align:center;">美团团购</div>
<div class="c " style="left:892px;top:708.4px;width:83px;height:38.3px;line-height:38.3px;text-align:right;padding-right:5.500px;">1</div>
<div class="c " style="left:975px;top:708.4px;width:104px;height:38.3px;line-height:38.3px;text-align:right;padding-right:5.500px;">89.90</div>
<div class="c " style="left:1079px;top:708.4px;width:91px;height:38.3px;line-height:38.3px;text-align:right;padding-right:5.500px;">100.00%</div>
<div class="c " style="left:1170px;top:708.4px;width:83px;height:38.3px;line-height:38.3px;text-align:right;padding-right:5.500px;">0</div>
<div class="c " style="left:1253px;top:708.4px;width:93px;height:38.3px;line-height:38.3px;text-align:right;padding-right:5.500px;"></div>
<div class="c " style="left:1346px;top:708.4px;width:94px;height:38.3px;line-height:38.3px;text-align:right;padding-right:5.500px;"></div>
<div class="c " style="left:1440px;top:708.4px;width:94px;height:38.3px;line-height:38.3px;text-align:right;padding-right:5.500px;"></div>
<div class="c " style="left:1534px;top:708.4px;width:105px;height:38.3px;line-height:38.3px;text-align:center;"></div>
<div class="c " style="left:1639px;top:708.4px;width:62px;height:38.3px;line-height:38.3px;text-align:center;">张丽华</div>
<div class="c " style="left:1701px;top:708.4px;width:192px;height:38.3px;line-height:38.3px;text-align:center;">2025-10-10 13:56:30</div>
<div class="row" style="top:746.7px;height:38.3px;background:#fafbfe"></div>
<div class="c " style="left:224px;top:746.7px;width:43px;height:38.3px;line-height:38.3px;text-align:left;padding-left:9px;">若风</div>
<div class="c " style="left:267px;top:746.7px;width:217px;height:38.3px;line-height:38.3px;text-align:center;">2510101425264463476</div>
<div class="c " style="left:484px;top:746.7px;width:43px;height:38.3px;line-height:38.3px;text-align:center;">早餐</div>
<div class="c " style="left:527px;top:746.7px;width:83px;height:38.3px;line-height:38.3px;text-align:center;">479003</div>
<div class="c " style="left:610px;top:746.7px;width:156px;height:38.3px;line-height:38.3px;text-align:center;">飘雪</div>
<div class="c " style="left:766px;top:746.7px;width:43px;height:38.3px;line-height:38.3px;text-align:center;">杯</div>
<div class="c " style="left:809px;top:746.7px;width:83px;height:38.3px;line-height:38.3px;text-align:center;">精选</div>
<div class="c " style="left:892px;top:746.7px;width:83px;height:38.3px;line-height:38.3px;text-align:right;padding-right:5.500px;">3</div>
<div class="c " style="left:975px;top:746.7px;width:104px;height:38.3px;line-height:38.3px;text-align:right;padding-right:5.500px;">87.00</div>
<div class="c " style="left:1079px;top:746.7px;width:91px;height:38.3px;line-height:38.3px;text-align:right;padding-right:5.500px;">100.00%</div>
<div class="c " style="left:1170px;top:746.7px;width:83px;height:38.3px;line-height:38.3px;text-align:right;padding-right:5.500px;">0</div>
<div class="c " style="left:1253px;top:746.7px;width:93px;height:38.3px;line-height:38.3px;text-align:right;padding-right:5.500px;"></div>
<div class="c " style="left:1346px;top:746.7px;width:94px;height:38.3px;line-height:38.3px;text-align:right;padding-right:5.500px;"></div>
<div class="c " style="left:1440px;top:746.7px;width:94px;height:38.3px;line-height:38.3px;text-align:right;padding-right:5.500px;"></div>
<div class="c " style="left:1534px;top:746.7px;width:105px;height:38.3px;line-height:38.3px;text-align:center;"></div>
<div class="c " style="left:1639px;top:746.7px;width:62px;height:38.3px;line-height:38.3px;text-align:center;">张丽华</div>
<div class="c " style="left:1701px;top:746.7px;width:192px;height:38.3px;line-height:38.3px;text-align:center;">2025-10-10 14:26:17</div>
<div class="hl" style="top:440px"></div>
<div class="hl" style="top:479px"></div>
<div class="hl" style="top:517px"></div>
<div class="hl" style="top:555px"></div>
<div class="hl" style="top:594px"></div>
<div class="hl" style="top:632px"></div>
<div class="hl" style="top:670px"></div>
<div class="hl" style="top:709px"></div>
<div class="hl" style="top:747px"></div>
<div class="vl" style="left:267px;top:402px;height:383px"></div>
<div class="vl" style="left:484px;top:402px;height:383px"></div>
<div class="vl" style="left:527px;top:402px;height:383px"></div>
<div class="vl" style="left:610px;top:402px;height:383px"></div>
<div class="vl" style="left:766px;top:402px;height:383px"></div>
<div class="vl" style="left:809px;top:402px;height:383px"></div>
<div class="vl" style="left:892px;top:402px;height:383px"></div>
<div class="vl" style="left:975px;top:402px;height:383px"></div>
<div class="vl" style="left:1079px;top:402px;height:383px"></div>
<div class="vl" style="left:1170px;top:402px;height:383px"></div>
<div class="vl" style="left:1253px;top:402px;height:383px"></div>
<div class="vl" style="left:1346px;top:402px;height:383px"></div>
<div class="vl" style="left:1440px;top:402px;height:383px"></div>
<div class="vl" style="left:1534px;top:402px;height:383px"></div>
<div class="vl" style="left:1639px;top:402px;height:383px"></div>
<div class="vl" style="left:1701px;top:402px;height:383px"></div>
<div class="vl" style="left:224px;top:402px;height:383px"></div>
<div class="vl" style="left:1893px;top:402px;height:383px"></div>
<div class="thbg" style="left:224px;top:785px;width:1670px;height:40px"></div>
<div class="c tot" style="left:224px;top:785.0px;width:43px;height:39.0px;line-height:39.0px;text-align:left;padding-left:9px;">总计</div>
<div class="c tot" style="left:892px;top:785.0px;width:83px;height:39.0px;line-height:39.0px;text-align:right;padding-right:5.500px;">27</div>
<div class="c tot" style="left:975px;top:785.0px;width:104px;height:39.0px;line-height:39.0px;text-align:right;padding-right:5.500px;">981.70</div>
<div class="c tot" style="left:1079px;top:785.0px;width:91px;height:39.0px;line-height:39.0px;text-align:right;padding-right:5.500px;">95.79%</div>
<div class="c tot" style="left:1170px;top:785.0px;width:83px;height:39.0px;line-height:39.0px;text-align:right;padding-right:5.500px;">41.31</div>

<!-- pagination -->
<div class="abs" style="left:1212px;top:854.500px;font-size:15.500px;line-height:22px;color:#aab0bb;white-space:nowrap">[共27条 每页10条]</div>
<div class="inp" style="left:1685px;top:849px;width:85px;border-radius:3px"><span style="margin-left:9px;font-size:13px;color:#555b6b">10 条/页</span>
  <svg class="abs" style="left:61px;top:9px" width="12" height="10" viewBox="0 0 12 10"><path d="M2 3l4 4 4-4" fill="none" stroke="#7b8090" stroke-width="1.2"/></svg>
</div>
<div class="lbl" style="left:1785px;top:849px;font-size:13.5px">跳至</div>
<div class="inp" style="left:1824px;top:850px;width:44px;height:27px;line-height:25px;border-color:#6e7483;border-radius:4px"><span style="margin-left:10px;font-size:13.5px">1</span></div>
<div class="lbl" style="left:1880px;top:849px;font-size:13.5px">页</div>
<div class="abs" style="left:1789.500px;top:928px;font-size:13.200px;line-height:18px;color:#424959;white-space:nowrap">2025-10-10 16:32</div>

<!-- ================= PHONE OVERLAY ================= -->
<div class="abs" style="left:1291px;top:103px;width:389.800px;height:814.700px;background:#fff;box-shadow:1px 2px 10px rgba(0,0,0,.3)"></div>
<div id="ph">
  <div class="abs" style="left:0;top:0;width:357px;height:83px;background:#4f95e9"></div>
  <div class="abs" style="left:19px;top:11.500px;font-size:15px;line-height:20px;color:#fff;-webkit-text-stroke:.3px #fff;transform:scaleX(.85);transform-origin:0 50%">16:31</div>
  <div class="abs" style="left:58.500px;top:16px;width:12px;height:12px;border-radius:3.500px;background:#f4f8fc"></div>
  <div class="abs" style="left:60.500px;top:18px;width:7px;height:7px;border-radius:50%;border:1.500px solid #5ba0e8"></div>
  <div class="abs" style="left:74.500px;top:16px;width:12px;height:12px;border-radius:3.500px;background:#f59a2e"></div>
  <svg class="abs" style="left:74.500px;top:16px" width="12" height="12" viewBox="0 0 12 12"><path d="M2.500 6.500L6.500 3M4.500 8.800L9.500 4.200" stroke="#fff" stroke-width="1.700" stroke-linecap="round"/></svg>
  <div class="abs" style="left:90.500px;top:16px;width:12px;height:12px;border-radius:3.500px;background:#3cc352"></div>
  <div class="abs" style="left:93px;top:18.500px;width:7px;height:5.500px;border-radius:1.500px;background:#d9f6dd"></div>
  <div class="abs" style="left:106.500px;top:16px;width:12.500px;height:12px;border-radius:3.500px;background:#f3de1e"></div>
  <div class="abs" style="left:108.500px;top:20px;width:8.500px;height:4px;background:#7a6a10"></div>
  <!-- right status icons -->
  <svg class="abs" style="left:208px;top:14.700px" width="132" height="15" viewBox="0 0 132 15" fill="#fff">
    <circle cx="9" cy="8" r="5.200" fill="#fff"/><path d="M9 5.200v3l-1.800 1.300" stroke="#4f95e9" stroke-width="1.100" fill="none"/><path d="M4 3.500l2-2M14 3.500l-2-2" stroke="#fff" stroke-width="1.500"/>
    <path d="M27 2c-2.600 0-4 2-4 4.500 0 2.500-1.200 3.600-1.800 4.200h11.600c-.6-.6-1.800-1.700-1.800-4.200C31 4 29.600 2 27 2zM25.600 11.800h2.800c0 .8-.6 1.400-1.400 1.400s-1.400-.6-1.400-1.400z"/><path d="M21.500 1.500l11 11.500" stroke="#4f95e9" stroke-width="2.200"/><path d="M22.200 1l11 11.500" stroke="#fff" stroke-width="1.200"/>
    <path d="M40.500 4l6 6-3 2.800V1.600l3 2.800-6 6" fill="none" stroke="#fff" stroke-width="1.300"/><circle cx="49.300" cy="5.600" r=".8"/><circle cx="49.300" cy="9" r=".8"/>
    <text x="54" y="6" font-size="5" font-weight="bold" font-family="Liberation Sans, sans-serif">5G</text>
    <rect x="60" y="9" width="1.800" height="4"/><rect x="63.200" y="7" width="1.800" height="6"/><rect x="66.400" y="4.500" width="1.800" height="8.500"/><rect x="69.600" y="2" width="1.800" height="11"/>
    <text x="77" y="6" font-size="5" font-weight="bold" font-family="Liberation Sans, sans-serif">5G</text>
    <rect x="81" y="9" width="1.800" height="4"/><rect x="84.200" y="7" width="1.800" height="6"/><rect x="87.400" y="4.500" width="1.800" height="8.500"/><rect x="90.600" y="2" width="1.800" height="11"/>
    <rect x="103" y="2.600" width="20.500" height="10.400" rx="2.600" fill="#dfeaf9"/><rect x="123.800" y="5.600" width="1.500" height="4.400" rx=".7" fill="#dfeaf9"/>
    <text x="113.200" y="11.200" font-size="9.500" font-weight="bold" text-anchor="middle" fill="#4f95e9" font-family="Liberation Sans, sans-serif">91</text>
  </svg>
  <!-- nav -->
  <svg class="abs" style="left:14px;top:54px" width="12" height="17" viewBox="0 0 12 17"><path d="M9.500 1.500L2.500 8.500l7 7" fill="none" stroke="#fff" stroke-width="1.500"/></svg>
  <div class="abs" style="left:0;top:51.500px;width:357px;text-align:center;font-size:17px;line-height:24px;color:#fff">云餐饮</div>
  <div class="abs" style="left:252px;top:46px;width:96px;height:32px;border-radius:16px;background:#3f79c6"></div>
  <div class="abs" style="left:299.500px;top:53px;width:1px;height:18px;background:#5a8ccf"></div>
  <div class="abs" style="left:266px;top:60.500px;width:3.400px;height:3.400px;border-radius:50%;background:#fff"></div>
  <div class="abs" style="left:272.500px;top:59px;width:6px;height:6px;border-radius:50%;background:#fff"></div>
  <div class="abs" style="left:282.500px;top:60.500px;width:3.400px;height:3.400px;border-radius:50%;background:#fff"></div>
  <div class="abs" style="left:316px;top:53px;width:18px;height:18px;border-radius:50%;border:2.200px solid #fff"></div>
  <div class="abs" style="left:322px;top:59px;width:6px;height:6px;border-radius:50%;background:#fff"></div>
  <!-- form rows -->
  <div class="abs" style="left:0;top:83px;width:84px;height:105px;background:#f7f7f7"></div>
  <div class="abs" style="left:0;top:116.500px;width:348px;height:1px;background:#efefef"></div>
  <div class="abs" style="left:0;top:151px;width:348px;height:1px;background:#efefef"></div>
  <div class="pl" style="top:83px">时间选择:</div>
  <div class="pl" style="top:117px">餐厅选择:</div>
  <div class="pl" style="top:152.500px">数据类型:</div>
  <div class="pv" style="top:83px;letter-spacing:-0.2px">2025-10-10 ~ 2025-10-10</div>
  <div class="pv" style="top:117px">友佳拾谷咖啡厅</div>
  <svg class="abs" style="left:336px;top:94px" width="9" height="14" viewBox="0 0 9 14"><path d="M1.500 1.500l5.500 5.500-5.500 5.500" fill="none" stroke="#444" stroke-width="1.200"/></svg>
  <svg class="abs" style="left:336px;top:128px" width="9" height="14" viewBox="0 0 9 14"><path d="M1.500 1.500l5.500 5.500-5.500 5.500" fill="none" stroke="#444" stroke-width="1.200"/></svg>
  <div class="abs" style="left:94px;top:156px;width:107px;height:28px;border-radius:14px;background:#4a90e2;color:#fff;font-size:13px;line-height:28px;text-align:center">营业额(实时)</div>
  <div class="abs" style="left:210px;top:156px;width:120px;height:28px;border-radius:14px;background:#f5f5f5;color:#333;font-size:13px;line-height:28px;text-align:center">营业收入(日结)</div>
  <div class="abs" style="left:0;top:188.500px;width:357px;height:8.500px;background:#f5f5f5"></div>
  <!-- stats -->
  <div class="st" style="left:8px"><i>总营业额(￥)</i><b>981.70</b></div>
  <div class="st" style="left:93px"><i>堂食(¥)</i><b>981.70</b></div>
  <div class="st" style="left:178px"><i>外带(¥)</i><b>0.00</b></div>
  <div class="st" style="left:263px"><i>快餐(¥)</i><b>0.00</b></div>
  <div class="abs" style="left:93px;top:206px;width:1px;height:34px;background:#f3f3f3"></div>
  <div class="abs" style="left:178px;top:206px;width:1px;height:34px;background:#f3f3f3"></div>
  <div class="abs" style="left:263px;top:206px;width:1px;height:34px;background:#f3f3f3"></div>
  <div class="abs" style="left:0;top:250px;width:357px;height:9px;background:#f5f5f5"></div>
  <div class="abs" style="left:10px;top:267px;font-size:13.600px;font-weight:bold;line-height:20px;color:#2b2b2b">菜品销售明细</div>
  <!-- table -->
  <div class="abs" style="left:9px;top:294px;width:339px;height:32px;background:#f2f2f2"></div>
  <div class="pr ph" style="top:294px;height:32px;line-height:35px;border:0"><span class="p1">餐桌</span><span class="p2">餐段</span><span class="p3">菜品编码</span><span class="p4">菜名</span></div>
<div class="pr" style="top:326.2px"><span class="p1">澄泊</span><span class="p2">早餐</span><span class="p3">479003</span><span class="p4">飘雪</span></div>
<div class="pr" style="top:359.3px"><span class="p1">天风</span><span class="p2">早餐</span><span class="p3">479003</span><span class="p4">飘雪</span></div>
<div class="pr" style="top:392.3px"><span class="p1">静空</span><span class="p2">早餐</span><span class="p3">479009</span><span class="p4">香水柠檬</span></div>
<div class="pr" style="top:425.4px"><span class="p1">静空</span><span class="p2">早餐</span><span class="p3">479006</span><span class="p4">养生水</span></div>
<div class="pr" style="top:458.4px"><span class="p1">静空</span><span class="p2">早餐</span><span class="p3">479006</span><span class="p4">养生水</span></div>
<div class="pr" style="top:491.5px"><span class="p1">静空</span><span class="p2">早餐</span><span class="p3">479009</span><span class="p4">香水柠檬</span></div>
<div class="pr" style="top:524.6px"><span class="p1">澄怀</span><span class="p2">早餐</span><span class="p3">479003</span><span class="p4">飘雪</span></div>
<div class="pr" style="top:557.6px"><span class="p1">非也</span><span class="p2">早餐</span><span class="p3">479004</span><span class="p4">竹叶青</span></div>
<div class="pr" style="top:590.7px"><span class="p1">静空</span><span class="p2">早餐</span><span class="p3">479105</span><span class="p4">4人清闲小包机麻</span></div>
<div class="pr" style="top:623.7px"><span class="p1">若风</span><span class="p2">早餐</span><span class="p3">479003</span><span class="p4">飘雪</span></div>
<div class="pr" style="top:656.8px"><span class="p1">若风</span><span class="p2">早餐</span><span class="p3">479009</span><span class="p4">香水柠檬</span></div>
<div class="pr" style="top:689.9px"><span class="p1">若风</span><span class="p2">早餐</span><span class="p3">479009</span><span class="p4">香水柠檬</span></div>
<div class="pr" style="top:722.9px"><span class="p1">若风</span><span class="p2">早餐</span><span class="p3">479003</span><span class="p4">飘雪</span></div>
<div class="pr" style="top:756.0px"><span class="p1">若风</span><span class="p2">早餐</span><span class="p3">479105</span><span class="p4">4人清闲小包机麻</span></div>
  <div class="abs" style="left:0;top:782px;width:357px;height:16px;background:#f8f8f8"></div>
  <div class="abs" style="left:118px;top:787px;width:121px;height:4px;border-radius:2px;background:#6e6e6e"></div>
</div>

<!-- ================= RED ANNOTATIONS ================= -->
<svg class="abs" style="left:0;top:0" width="1920" height="963" viewBox="0 0 1920 963">
  <rect x="225.400" y="182.400" width="346.100" height="59.600" rx="5" fill="none" stroke="#ec4339" stroke-width="4.200"/>
  <rect x="22.500" y="251.200" width="219.100" height="42" rx="5" fill="none" stroke="#ec4339" stroke-width="4.200"/>
  <rect x="1014.600" y="790.100" width="128" height="45.300" rx="5" fill="none" stroke="#ec4339" stroke-width="4.200"/>
  <path d="M586 266.500L1398.500 293.700L1394.600 290L1409.200 297.600L1394.600 305.400L1399 301.700L586 267.700Z" fill="#ec4339"/>
</svg>
<div class="abs" style="left:776px;top:294.400px;font-size:31px;letter-spacing:.15px;line-height:44px;color:#ec4339;white-space:nowrap">这个是实施的按照下单时间的</div>

</body>
</html>
